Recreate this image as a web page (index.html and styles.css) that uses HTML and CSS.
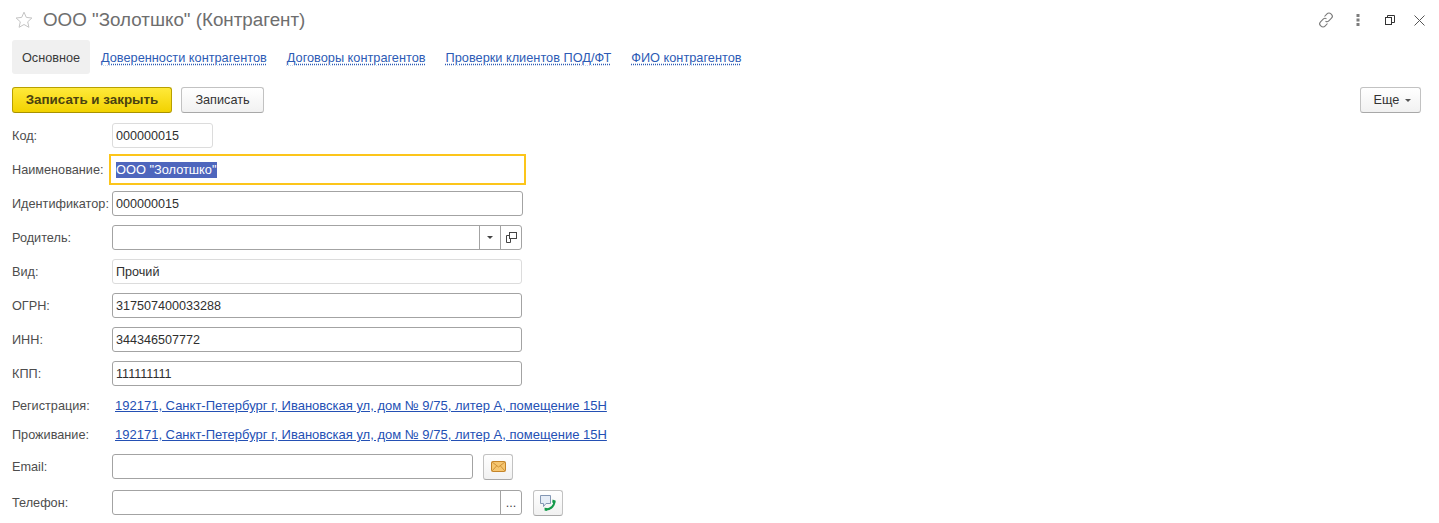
FILE: index.html
```html
<!DOCTYPE html>
<html lang="ru">
<head>
<meta charset="utf-8">
<title>ООО "Золотшко" (Контрагент)</title>
<link rel="stylesheet" href="styles.css">
</head>
<body>
<header class="titlebar">
  <svg class="star" width="18" height="18" viewBox="0 0 18 18"><path d="M9 1.2l2.3 5.2 5.6.6-4.2 3.8 1.2 5.5L9 13.5l-4.9 2.8 1.2-5.5L1.100 7l5.600-.6z" fill="none" stroke="#c4c4c4" stroke-width="1"/></svg>
  <h1 class="title">ООО "Золотшко" (Контрагент)</h1>
  <div class="winbtns">
    <svg class="link-ic" width="18" height="18" viewBox="0 0 18 18" fill="none" stroke="#7a7a7a" stroke-width="1.100"><path d="M7.500 5.500l2.500-2.700a2.700 2.700 0 0 1 3.900 0l.6.6a2.700 2.700 0 0 1 0 3.800l-2.700 2.700a2.700 2.700 0 0 1-3.300.4"/><path d="M10.500 12.500L8 15.200a2.700 2.700 0 0 1-3.900 0l-.6-.6a2.700 2.700 0 0 1 0-3.800l2.700-2.700a2.700 2.700 0 0 1 3.300-.4"/></svg>
    <svg class="dots-ic" width="4" height="12" viewBox="0 0 4 12" fill="#7d7d7d"><rect x="0.500" y="0" width="3" height="3"/><rect x="0.500" y="4.500" width="3" height="3"/><rect x="0.500" y="9" width="3" height="3"/></svg>
    <svg class="restore-ic" width="10" height="10" viewBox="0 0 10 10" fill="none" stroke="#333" stroke-width="1"><rect x="0.500" y="2.500" width="6" height="7" fill="#fff"/><path d="M2.500 2.500v-2h7v7h-3" stroke-width="1"/></svg>
    <svg class="close-ic" width="11" height="11" viewBox="0 0 11 11" fill="none" stroke="#555" stroke-width="1"><path d="M.5.500l10 10M10.500.500l-10 10"/></svg>
  </div>
</header>
<nav class="tabs">
  <span class="tab tab-active">Основное</span>
  <a class="tab tab-link">Доверенности контрагентов</a>
  <a class="tab tab-link">Договоры контрагентов</a>
  <a class="tab tab-link">Проверки клиентов ПОД/ФТ</a>
  <a class="tab tab-link">ФИО контрагентов</a>
</nav>
<div class="toolbar">
  <button class="btn btn-primary">Записать и закрыть</button>
  <button class="btn btn-plain">Записать</button>
  <button class="btn btn-more">Еще<span class="caret"></span></button>
</div>
<main class="form">
  <div class="row">
    <label class="lbl">Код:</label>
    <div class="field field-ro w-code">000000015</div>
  </div>
  <div class="row">
    <label class="lbl">Наименование:</label>
    <div class="field field-focus"><span class="sel">ООО "Золотшко"</span></div>
  </div>
  <div class="row">
    <label class="lbl">Идентификатор:</label>
    <div class="field w-wide">000000015</div>
  </div>
  <div class="row">
    <label class="lbl">Родитель:</label>
    <div class="field field-combo w-std">
      <span class="combo-text"></span>
      <span class="combo-btn"><span class="caret caret-dark"></span></span>
      <span class="combo-btn">
        <svg width="11" height="11" viewBox="0 0 11 11" fill="none" stroke="#444" stroke-width="1"><rect x="3.500" y="0.500" width="7" height="6"/><path d="M3.500 3.500h-3v7h4V6.500"/></svg>
      </span>
    </div>
  </div>
  <div class="row">
    <label class="lbl">Вид:</label>
    <div class="field field-ro w-std">Прочий</div>
  </div>
  <div class="row">
    <label class="lbl">ОГРН:</label>
    <div class="field w-std">317507400033288</div>
  </div>
  <div class="row">
    <label class="lbl">ИНН:</label>
    <div class="field w-std">344346507772</div>
  </div>
  <div class="row">
    <label class="lbl">КПП:</label>
    <div class="field w-std">111111111</div>
  </div>
  <div class="row row-link row-reg">
    <label class="lbl">Регистрация:</label>
    <a class="addr">192171, Санкт-Петербург г, Ивановская ул, дом № 9/75, литер А, помещение 15Н</a>
  </div>
  <div class="row row-link row-live">
    <label class="lbl">Проживание:</label>
    <a class="addr">192171, Санкт-Петербург г, Ивановская ул, дом № 9/75, литер А, помещение 15Н</a>
  </div>
  <div class="row row-email">
    <label class="lbl">Email:</label>
    <div class="field w-email"></div>
    <button class="icon-btn">
      <svg width="15" height="11" viewBox="0 0 15 11"><rect x="0.500" y="0.500" width="14" height="10" rx="1" fill="#f6c670" stroke="#c4842a"/><path d="M1 1l6.500 5L14 1M1 10l4.500-5M14 10L9.500 5" fill="none" stroke="#cf9238"/></svg>
    </button>
  </div>
  <div class="row row-phone">
    <label class="lbl">Телефон:</label>
    <div class="field field-combo w-phone">
      <span class="combo-text"></span>
      <span class="combo-btn combo-dots">...</span>
    </div>
    <button class="icon-btn">
      <svg width="16" height="16" viewBox="0 0 16 16"><path d="M.5.500h10v8H6L3.500 11.500v-3h-3z" fill="#e6edf7" stroke="#8397b4"/><path d="M14.200 5.800C15 10 11 14.600 6 14.600" fill="none" stroke="#149a4a" stroke-width="2"/><path d="M12.600 4.600l3 1.200-.4 2.600-3-1zM4.500 12.800l2.400.2.4 2.800-2.600-.1z" fill="#149a4a"/></svg>
    </button>
  </div>
</main>
</body>
</html>
```
FILE: styles.css
```css
* { box-sizing: border-box; }
html, body { margin: 0; padding: 0; }
body {
  width: 1439px;
  height: 523px;
  overflow: hidden;
  background: #fff;
  font: 12.7px/16px "Liberation Sans", Arial, sans-serif;
  color: #333;
}
.titlebar {
  display: flex;
  align-items: center;
  height: 40px;
  padding: 0 14px 0 15px;
}
.star { flex: none; }
.title {
  margin: 0 0 0 10px;
  font-size: 18.800px;
  font-weight: 400;
  line-height: 24px;
  color: #6e6e6e;
}
.winbtns {
  margin-left: auto;
  display: flex;
  align-items: center;
}
.link-ic { margin-right: 21px; }
.dots-ic { margin-right: 25px; }
.restore-ic { margin-right: 19px; }
.tabs {
  display: flex;
  align-items: stretch;
  height: 34px;
  padding-left: 12px;
}
.tab {
  display: flex;
  align-items: center;
  padding-top: 2px;
  white-space: nowrap;
}
.tab-active {
  width: 78px;
  justify-content: center;
  background: #f0f0f0;
  border-radius: 3px;
  color: #3a3a3a;
}
.tab-link {
  font-size: 12.750px;
  color: #2d5bb5;
  margin-left: 11px;
  margin-right: 9px;
  text-decoration: underline dotted #2d5bb5;
  text-underline-offset: 2px;
}
.toolbar {
  display: flex;
  align-items: flex-start;
  height: 49px;
  padding: 13px 18px 0 12px;
}
.btn {
  height: 26px;
  padding: 0;
  border-radius: 3px;
  font: 12.7px/16px "Liberation Sans", Arial, sans-serif;
  color: #333;
}
.btn-primary {
  width: 160px;
  font-size: 13.400px;
  font-weight: 700;
  background: linear-gradient(#ffe93a, #f2d200);
  border: 1px solid #b8a000;
  border-bottom-color: #a89200;
  color: #4a4210;
}
.btn-plain, .btn-more {
  background: linear-gradient(#fff, #f1f1f1);
  border: 1px solid #c2c2c2;
  border-bottom-color: #a8a8a8;
}
.btn-plain {
  width: 83px;
  margin-left: 9px;
}
.btn-more {
  width: 61px;
  margin-left: auto;
  padding-left: 4px;
}
.caret {
  display: inline-block;
  width: 0;
  height: 0;
  margin-left: 6px;
  border: 3px solid transparent;
  border-top: 3px solid #555;
  border-bottom: 0;
  vertical-align: 2px;
}
.caret-dark { margin: 0; border-top-color: #444; vertical-align: middle; }
.form {
  display: flex;
  flex-direction: column;
  gap: 9px;
  padding-left: 12px;
}
.row {
  display: flex;
  align-items: center;
  height: 25px;
}
.lbl {
  flex: none;
  width: 100px;
  color: #4d4d4d;
  white-space: nowrap;
}
.field {
  height: 25px;
  padding: 1px 3px 0;
  border: 1px solid #a3a3a3;
  border-radius: 3px;
  font-size: 12.600px;
  line-height: 23px;
  color: #2f2f2f;
  background: #fff;
}
.field-ro { border-color: #dcdcdc; }
.w-code { width: 101px; }
.w-wide { width: 411px; }
.w-std { width: 410px; }
.w-email { width: 361px; }
.w-phone { width: 410px; }
.field-focus {
  width: 417px;
  height: 31px;
  margin-left: -3px;
  padding: 1px 5px 0;
  border: 2px solid #fcc51a;
  border-radius: 0;
  font-size: 12.800px;
  line-height: 26px;
  flex: none;
}
.sel {
  display: inline-block;
  height: 16px;
  line-height: 16px;
  background: #4e66bd;
  color: #fff;
}
.field-combo {
  display: flex;
  padding: 0;
}
.combo-text { flex: 1; }
.combo-btn {
  flex: none;
  width: 21px;
  display: flex;
  align-items: center;
  justify-content: center;
  border-left: 1px solid #a3a3a3;
}
.combo-dots { color: #444; line-height: 20px; }
.row-reg { margin-top: 1px; height: 20px; }
.row-live { height: 20px; }
.row-phone { margin-top: 2px; }
.addr {
  margin-left: 3px;
  font-size: 13px;
  color: #2450b4;
  text-decoration: underline;
  white-space: nowrap;
}
.icon-btn {
  display: flex;
  align-items: center;
  justify-content: center;
  flex: none;
  width: 30px;
  height: 26px;
  margin-left: 10px;
  padding: 0;
  background: linear-gradient(#fff, #f1f1f1);
  border: 1px solid #c2c2c2;
  border-bottom-color: #a8a8a8;
  border-radius: 3px;
}
.w-phone + .icon-btn { margin-left: 11px; }
```
